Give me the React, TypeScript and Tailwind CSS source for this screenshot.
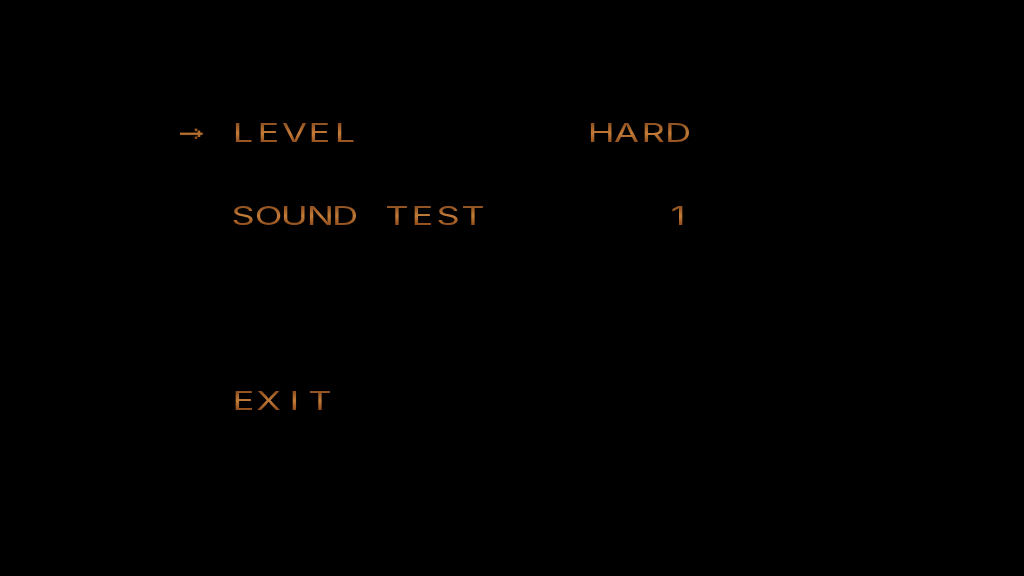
import React from "react";

const ROWS = 28;
const COLS = 40;

const lines: Record<number, string> = {
  6: "       > LEVEL         HARD",
  10: "         SOUND TEST       1",
  19: "         EXIT",
};

function Arrow() {
  return (
    <svg width="26" height="18" viewBox="0 0 26 18" className="block">
      <defs>
        <linearGradient id="ag" x1="0" y1="0" x2="0" y2="1">
          <stop offset="0" stopColor="#9a5a26" />
          <stop offset="0.55" stopColor="#c27a36" />
          <stop offset="1" stopColor="#8a4a1c" />
        </linearGradient>
      </defs>
      <rect x="1" y="7.5" width="23" height="2.6" fill="url(#ag)" />
      <rect x="16" y="3.5" width="2.6" height="2.6" fill="#9a5a26" />
      <rect x="19" y="5.5" width="2.6" height="2.6" fill="#b06c2e" />
      <rect x="19" y="9.5" width="2.6" height="2.6" fill="#b06c2e" />
      <rect x="16" y="11.5" width="2.6" height="2.6" fill="#8a4a1c" />
    </svg>
  );
}

function Cell({ ch }: { ch: string }) {
  if (ch === ">") {
    return (
      <div className="w-[25.6px] h-full flex items-center justify-center shrink-0">
        <Arrow />
      </div>
    );
  }
  return (
    <div className="w-[25.6px] h-full flex justify-center shrink-0 overflow-visible">
      {ch !== " " && (
        <span
          className="inline-block scale-x-[1.45] origin-center bg-gradient-to-b from-[#8e5020] via-[#c47c38] to-[#8a481a] bg-clip-text text-transparent text-[25px] leading-[21px] font-normal"
          style={{ fontFamily: "Inter, 'DejaVu Sans', sans-serif" }}
        >
          {ch}
        </span>
      )}
    </div>
  );
}

export default function App() {
  const rows = Array.from({ length: ROWS }, (_, r) => {
    const s = (lines[r] ?? "").padEnd(COLS, " ");
    return s;
  });
  return (
    <div className="w-[1024px] h-[576px] bg-black overflow-hidden flex flex-col">
      {rows.map((s, r) => (
        <div key={r} className="h-[20.5714px] flex shrink-0">
          {s.split("").map((ch, c) => (
            <Cell key={c} ch={ch} />
          ))}
        </div>
      ))}
    </div>
  );
}
